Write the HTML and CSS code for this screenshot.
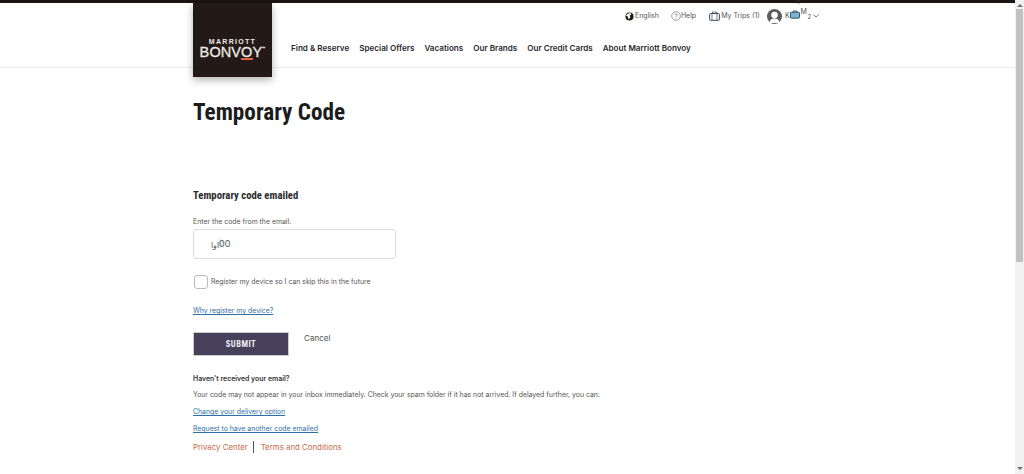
FILE: index.html
```html
<!DOCTYPE html>
<html lang="en">
<head>
<meta charset="utf-8">
<title>Temporary Code</title>
<link rel="stylesheet" href="styles.css">
</head>
<body>
<div class="page">
  <div class="topbar"></div>
  <header class="header">
    <div class="shell header-inner">
      <a class="logo" href="#">
        <span class="logo-top">MARRIOTT</span>
        <span class="logo-main">BONV<span class="logo-o">O</span>Y<sup class="tm">™</sup></span>
      </a>
      <div class="header-right">
        <div class="utility">
          <span class="util util-lang">
            <svg class="ico" viewBox="0 0 10 10" width="9" height="9"><circle cx="5" cy="5" r="4.5" fill="#1c1c1c"/><path d="M3 2l3-1 1 2-2 1 1 2-2 2-1-3-2-1z" fill="#fff"/></svg>English</span>
          <span class="util util-help">
            <svg class="ico" viewBox="0 0 10 10" width="10" height="10"><circle cx="5" cy="5" r="4.3" fill="none" stroke="#777" stroke-width=".7"/><path d="M3.800 4c0-1.600 2.500-1.600 2.500 0 0 1-1.200 1-1.200 2M5.100 7v.6" fill="none" stroke="#777" stroke-width=".7"/></svg>Help</span>
          <span class="util util-trips">
            <svg class="ico" viewBox="0 0 11 10" width="11" height="10"><rect x=".6" y="2.500" width="9.800" height="6.800" rx="1" fill="none" stroke="#3a4a5a"/><path d="M3.500 2.500V1h4v1.500M3 3v6M8 3v6" fill="none" stroke="#3a4a5a" stroke-width=".7"/></svg>My Trips (1)</span>
          <span class="util util-user">
            <svg class="avatar" viewBox="0 0 16 16" width="15" height="15"><circle cx="8" cy="8" r="8" fill="#5c5c5c"/><circle cx="8" cy="6.500" r="3.500" fill="#fff"/><path d="M2.800 15c0-3.500 2-5 5.200-5s5.200 1.500 5.200 5z" fill="#fff"/></svg>
            <span class="user-k">K</span>
            <span class="overlay-wrap">
              <span class="shade"></span>
              <svg class="case" viewBox="0 0 11 9" width="10" height="9"><rect x=".5" y="2" width="10" height="6.500" rx="1" fill="#7fb4cf" stroke="#27465a"/><path d="M3.500 2V.7h4V2" fill="none" stroke="#27465a"/></svg>
              <span class="user-m">M</span><span class="user-s">2</span>
            </span>
            <svg class="chev" viewBox="0 0 8 5" width="6" height="4"><path d="M.5.7 4 4 7.500.7" fill="none" stroke="#333" stroke-width=".9"/></svg>
          </span>
        </div>
        <nav class="nav">
          <a href="#">Find &amp; Reserve</a>
          <a href="#">Special Offers</a>
          <a href="#">Vacations</a>
          <a href="#">Our Brands</a>
          <a href="#">Our Credit Cards</a>
          <a href="#">About Marriott Bonvoy</a>
        </nav>
      </div>
    </div>
  </header>
  <main class="shell main">
    <h1 class="title">Temporary Code</h1>
    <h2 class="subtitle">Temporary code emailed</h2>
    <label class="field-label" for="code">Enter the code from the email:</label>
    <div class="input">
      <span class="input-blur"></span>
      <span class="input-a">اوا</span><span class="input-b">00</span>
    </div>
    <div class="check-row">
      <span class="checkbox"></span>
      <span class="check-label">Register my device so I can skip this in the future</span>
    </div>
    <a class="link why" href="#">Why register my device?</a>
    <div class="actions">
      <button class="submit" type="button">SUBMIT</button>
      <a class="cancel" href="#">Cancel</a>
    </div>
    <p class="help-head">Haven't received your email?</p>
    <p class="help-text">Your code may not appear in your inbox immediately. Check your spam folder if it has not arrived. If delayed further, you can:</p>
    <a class="link change" href="#">Change your delivery option</a>
    <a class="link request" href="#">Request to have another code emailed</a>
    <div class="foot">
      <a href="#">Privacy Center</a>
      <span class="sep"></span>
      <a href="#">Terms and Conditions</a>
    </div>
  </main>
</div>
<aside class="scrollbar">
  <span class="arrow-up"></span>
  <span class="thumb"></span>
  <span class="track"></span>
  <span class="arrow-down"></span>
</aside>
</body>
</html>
```
FILE: styles.css
```css
* { box-sizing: border-box; }
html, body { height: 100%; }
body {
  margin: 0;
  height: 474px;
  overflow: hidden;
  display: flex;
  background: #fff;
  color: #1c1c1c;
  font-family: "Inter", "Liberation Sans", sans-serif;
}
a { text-decoration: none; color: inherit; }
p, h1, h2 { margin: 0; }

.page { width: 1015px; flex: none; }
.topbar { height: 3px; background: #1c1410; }
.shell { margin-left: 193px; }

.header { height: 65px; border-bottom: 1px solid #ebebeb; }
.header-inner { display: flex; height: 64px; }
.logo {
  width: 79px;
  height: 74px;
  background: #231a17;
  box-shadow: 0 3px 8px rgba(0,0,0,.3);
  color: #ece9e6;
  display: flex;
  flex-direction: column;
  align-items: center;
  padding-top: 35px;
  position: relative;
  z-index: 2;
}
.logo-top { font: 700 7px/8px "Liberation Sans", sans-serif; letter-spacing: 1.3px; }
.logo-main { font: 400 14.5px/13px "Liberation Sans", sans-serif; letter-spacing: .1px; white-space: nowrap; -webkit-text-stroke: .3px #ece9e6; }
.logo-o { box-shadow: inset 0 -2px 0 #e0613a; }
.tm { font-size: 3px; vertical-align: 8px; line-height: 0; }

.header-right { flex: 1; position: relative; }
.utility {
  display: flex;
  align-items: center;
  height: 26px;
  padding-left: 353px;
  font: 400 7px/10px "Inter", sans-serif;
  color: #555;
}
.util { display: flex; align-items: center; white-space: nowrap; }
.ico { flex: none; margin-right: 1px; }
.util-help { margin-left: 12px; }
.util-help .ico { margin-right: 0; }
.util-trips { margin-left: 13px; }
.util-user { margin-left: 7px; position: relative; }
.avatar { flex: none; }
.user-k { margin-left: 3px; }
.overlay-wrap { position: relative; display: inline-block; width: 22px; height: 12px; }
.case { position: absolute; left: 0; top: 0; }
.shade {
  position: absolute; left: 5px; top: -15px; width: 7px; height: 10px;
  background: radial-gradient(closest-side, rgba(40,40,40,.8), rgba(40,40,40,0));
}
.user-m { position: absolute; left: 11px; top: -3px; font-size: 7px; }
.user-s { position: absolute; left: 18px; top: 2px; font-size: 6px; }
.chev { margin-left: 1px; }

.nav {
  display: flex;
  gap: 10px;
  padding-left: 19px;
  margin-top: 13px;
  font: 600 8.1px/12px "Inter", "Liberation Sans", sans-serif;
  color: #2a2a2e;
  white-space: nowrap;
}

.main { padding-top: 29px; position: relative; }
.title {
  font: 700 23.2px/30px "Roboto", sans-serif;
  font-stretch: 75%;
  color: #1c1c1c;
}
.subtitle {
  margin-top: 62px;
  font: 700 10.7px/14px "Roboto", sans-serif;
  font-stretch: 75%;
  color: #2a2a2e;
}
.field-label {
  display: block;
  margin-top: 14px;
  font: 400 6.9px/10px "Inter", sans-serif;
  color: #555;
}
.input {
  width: 203px;
  height: 30px;
  margin-top: 2px;
  border: 1px solid #dcdcdc;
  border-radius: 3px;
  display: flex;
  align-items: center;
  padding-left: 17px;
  font: 400 9px/12px "Inter", sans-serif;
  color: #555;
  position: relative;
}
.input-blur {
  position: absolute; left: 21px; top: 7px; width: 11px; height: 12px;
  background: radial-gradient(closest-side, rgba(190,215,235,.6), rgba(190,215,235,0));
}
.input-a { font-size: 8px; position: relative; top: 1px; }
.input-b { position: relative; }

.check-row { display: flex; align-items: center; margin-top: 16px; }
.checkbox {
  width: 14px; height: 14px;
  border: 1px solid #bbb;
  border-radius: 3px;
  margin-left: 1px;
  flex: none;
}
.check-label {
  margin-left: 3px;
  font: 400 6.9px/10px "Inter", sans-serif;
  color: #555;
}
.link {
  display: block;
  width: max-content;
  font: 400 6.9px/10px "Inter", sans-serif;
  color: #2f6fa8;
  text-decoration: underline;
}
.why { margin-top: 17px; }

.actions { display: flex; align-items: flex-start; margin-top: 16px; }
.submit {
  width: 96px;
  height: 24px;
  background: #46405a;
  border: 1px solid #c9c9d2;
  color: #efeff2;
  font: 700 8.5px/22px "Roboto", sans-serif;
  font-stretch: 75%;
  letter-spacing: .5px;
  padding: 0;
}
.cancel {
  margin-left: 15px;
  font: 400 8.1px/12px "Inter", sans-serif;
  color: #555;
}
.help-head {
  margin-top: 18px;
  font: 600 6.9px/10px "Inter", sans-serif;
  color: #333;
}
.help-text {
  margin-top: 6px;
  font: 400 6.9px/10px "Inter", sans-serif;
  color: #555;
  white-space: nowrap;
}
.change { margin-top: 7px; }
.request { margin-top: 7px; }
.foot {
  display: flex;
  align-items: center;
  margin-top: 7px;
  font: 400 7.85px/12px "Inter", sans-serif;
  color: #c8694a;
}
.sep { width: 1px; height: 12px; background: #555; margin: 0 7px 0 5px; }

.scrollbar {
  width: 9px;
  flex: none;
  height: 474px;
  background: #f1f1f1;
  display: flex;
  flex-direction: column;
  align-items: center;
}
.arrow-up {
  margin-top: 4px;
  border: 3px solid transparent;
  border-top-width: 0;
  border-bottom-color: #707070;
  height: 3px;
  width: 6px;
  flex: none;
}
.thumb { width: 7px; height: 253px; margin-top: 2px; background: #c1c1c1; flex: none; }
.track { flex: 1; }
.arrow-down {
  margin-bottom: 4px;
  border: 3px solid transparent;
  border-bottom-width: 0;
  border-top-color: #707070;
  height: 3px;
  width: 6px;
  flex: none;
}
```
